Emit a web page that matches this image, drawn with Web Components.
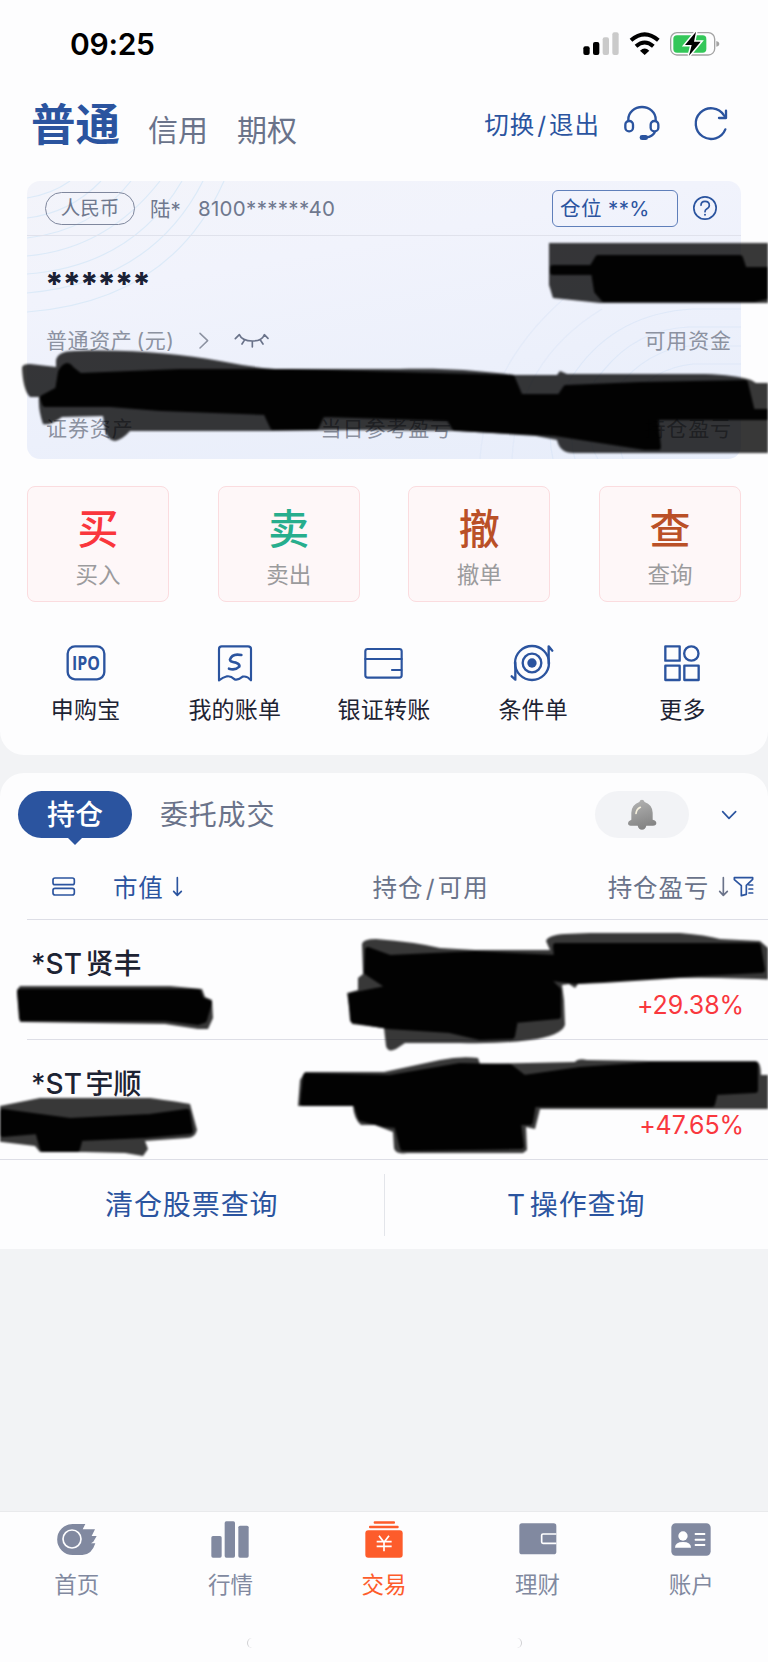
<!DOCTYPE html>
<html lang="zh-CN">
<head>
<meta charset="utf-8">
<title>交易</title>
<style>
html,body{margin:0;padding:0}
body{width:768px;height:1662px;overflow:hidden;background:#f2f3f5;font-family:"Inter","Noto Sans CJK SC",sans-serif}
</style>
</head>
<body>
<trade-app></trade-app>
<script>
const define=(name,html,init)=>{
  const t=document.createElement('template');
  t.innerHTML='<style>*{box-sizing:border-box}'+html;
  customElements.define(name,class extends HTMLElement{
    constructor(){super();this.attachShadow({mode:'open'}).append(t.content.cloneNode(true));}
    connectedCallback(){if(init)init(this,this.shadowRoot);}
  });
};

/* name: [width, height, viewBox, markup] — artwork is drawn on a 3x grid */
const S='fill="none" stroke="currentColor" stroke-linecap="round" stroke-linejoin="round"';
const ICONS={
signal:[36,24,'592 95 108 72','<rect x="593" y="138" width="19" height="26" rx="6"/><rect x="622" y="125" width="19" height="39" rx="6"/><g fill="#cacaca"><rect x="651" y="111" width="19" height="53" rx="6"/><rect x="680" y="96" width="19" height="68" rx="6"/></g>'],
wifi:[31,24,'731 95 93 72','<g fill="none" stroke="currentColor" stroke-width="12"><path d="M737 120Q778 84 819 120"/><path d="M752 138Q778 115 804 138"/></g><path d="M764 151Q778 138 792 151L778 164Z"/>'],
battery:[50,26,'857 92 150 78','<rect x="859" y="97" width="132" height="67" rx="19" fill="none" stroke="#a3a3a3" stroke-width="4"/><path d="M996 122Q1005 124 1005 130Q1005 137 996 139Z" fill="#a3a3a3"/><rect x="867" y="105" width="99" height="52" rx="11" fill="#34c759"/><path d="M935 94L902 134H922L914 166L949 124H929Z" stroke="#fff" stroke-width="9" paint-order="stroke"/>'],
headset:[36,36,'720 315 108 108','<g '+S+' stroke-width="7"><path d="M733 362V358A41 37 0 0 1 815 358V362M812 397Q805 410 787 412"/><rect x="724" y="363" width="23" height="31" rx="11"/><rect x="800" y="363" width="23" height="31" rx="11"/></g><rect x="767" y="405" width="25" height="15" rx="7"/>'],
refresh:[34,34,'929 318 102 102','<g '+S+' stroke-width="7"><path d="M1023 388A46 46 0 1 1 1019 346L1024 353"/><path d="M1025 332V354H1004"/></g>'],
help:[24,24,'927 589 72 72','<circle cx="963" cy="625" r="33.500" fill="none" stroke="currentColor" stroke-width="5"/><g '+S+' stroke-width="5"><path d="M951 617Q951 605 963 605Q976 605 976 617Q976 624 968 628Q963 631 963 636"/></g><circle cx="963" cy="645" r="3"/>'],
chev:[10,18,'597 304 30 54','<path '+S+' stroke-width="4.500" d="M600 308L623 330L600 352"/>'],
eye:[36,16,'700 309 108 48','<g '+S+' stroke-width="5"><path d="M704 326L716 314Q724 333 755 333Q784 333 791 314L802 325M731 331L724 342M755 334V351M779 330L787 342"/></g>'],
ipo:[40,36,'197 526 120 108','<rect x="202" y="530" width="110" height="99" rx="22" fill="none" stroke="currentColor" stroke-width="7"/><text x="257" y="600" text-anchor="middle" font-family="Open Sans" font-weight="700" font-size="57" textLength="84" lengthAdjust="spacingAndGlyphs">IPO</text>'],
bill:[36,37,'651 524 108 111','<g '+S+' stroke-width="6.500"><path d="M657 630V536Q657 528 665 528H744Q753 528 753 536V630Q741 616 728 619Q715 630 704 627Q692 616 681 618Q668 622 657 630Z"/></g><path '+S+' stroke-width="8" d="M724 554Q696 548 690 568Q690 574 708 577Q720 581 718 589Q706 601 687 595"/>'],
card:[40,32,'324 532 120 96','<g '+S+' stroke-width="6.500"><rect x="328" y="538" width="109" height="86" rx="7"/><path d="M328 568H437M408 601H436"/></g>'],
target:[46,40,'382 522 138 120','<g '+S+' stroke-width="7"><circle cx="448" cy="582" r="51"/><circle cx="448" cy="582" r="28"/><path d="M498 583V532L509 545M398 581V632L387 622"/></g><circle cx="448" cy="582" r="14"/>'],
more:[36,36,'838 525 108 108','<g '+S+' stroke-width="7"><rect x="842" y="529" width="43" height="43"/><circle cx="920" cy="550.500" r="21.500"/><rect x="842" y="587" width="43" height="43"/><rect x="899" y="587" width="43" height="43"/></g>'],
bell:[30,32,'727 87 90 96','<defs><linearGradient id="g" x1="0" y1="0" x2="0.300" y2="1"><stop offset="0" stop-color="#b5b5b5"/><stop offset="1" stop-color="#858585"/></linearGradient></defs><path fill="url(#g)" d="M764 96Q766 89 772 89Q777 89 780 96Q803 104 804 128V149Q815 152 815 159Q815 167 805 167H785Q782 179 772 179Q762 179 759 167H738Q730 167 730 159Q730 153 740 149V128Q741 104 764 96Z"/><path d="M754 130Q756 117 767 112" fill="none" stroke="#f5f0dd" stroke-width="5" stroke-linecap="round"/>'],
down:[16,12,'1009 116 48 36','<path '+S+' stroke-width="5" d="M1014 124L1033 144L1053 124"/>'],
list:[24,19,'156 325 72 57','<g fill="none" stroke="currentColor" stroke-width="5"><rect x="159" y="328" width="64" height="20" rx="6"/><rect x="159" y="359" width="64" height="20" rx="6"/></g>'],
arrow:[11,21,'516 321 33 63','<path '+S+' stroke-width="5" d="M532 326V378M521 367L532 379L544 367"/>'],
filter:[22,21,'1045 320 66 63','<g '+S+' stroke-width="5"><path d="M1049 325H1104V330L1085 348V375L1070 379V349L1049 331ZM1093 347H1104M1093 359H1104M1093 371H1104"/></g>'],
home:[40,32,'172 102 120 96','<path d="M219 105H257L249 121H286L276 141H291L281 158L274 163H287Q276 198 248 198H219A46 46 0 0 1 219 105Z"/><circle cx="217" cy="150" r="27" fill="none" stroke="#fdfdfe" stroke-width="5"/>'],
bars:[38,37,'636 93 114 111','<rect x="637" y="138" width="31" height="65" rx="5"/><rect x="677" y="94" width="31" height="109" rx="5"/><rect x="718" y="107" width="31" height="96" rx="5"/>'],
trade:[38,37,'1095 93 114 111','<rect x="1121" y="94" width="64" height="7" rx="3"/><rect x="1107" y="107" width="89" height="8" rx="3"/><rect x="1096" y="121" width="112" height="82" rx="9"/><g fill="none" stroke="#fff" stroke-width="5"><path d="M1137 137L1152 157L1167 137M1152 157V184M1130 155H1175M1130 169H1175"/></g>'],
wallet:[38,32,'401 101 114 96','<rect x="402" y="102" width="111" height="93" rx="8"/><path d="M513 134H473Q469 134 469 138V158Q469 162 473 162H513" fill="none" stroke="#fff" stroke-width="5"/>'],
account:[40,33,'860 99 120 99','<rect x="861" y="100" width="118" height="97" rx="13"/><g fill="#fff"><circle cx="896" cy="138" r="14"/><path d="M872 173Q872 156 896 156Q920 156 920 173Z"/><rect x="931" y="129" width="32" height="6" rx="2"/><rect x="931" y="146" width="32" height="6" rx="2"/><rect x="931" y="162" width="32" height="6" rx="2"/></g>']
};
define('app-icon',':host{display:block;flex:none}svg{display:block;overflow:visible}</style>',(el,r)=>{
  const [w,h,vb,m]=ICONS[el.getAttribute('name')];
  const d=document.createElement('div');
  d.innerHTML=`<svg width="${w}" height="${h}" viewBox="${vb}" fill="currentColor">${m}</svg>`;
  r.append(d);
});

define('status-bar',`:host{display:flex;height:88px;align-items:center;padding:0 48px 0 70px;color:#000}
b{font-weight:600;font-size:30px;line-height:40px;letter-spacing:-.3px;flex:1}
app-icon+app-icon{margin-left:10px}</style>
<b>09:25</b><app-icon name="signal"></app-icon><app-icon name="wifi"></app-icon><app-icon name="battery"></app-icon>`);

define('page-header',`:host{display:flex;height:93px;align-items:flex-start;padding-left:31px;padding-right:40px;color:#6a738a;white-space:nowrap}
b{font-weight:600;font-size:44.500px;line-height:50px;margin-top:12px;color:#2b549f}
.t{font-size:30px;line-height:40px;margin-top:22px}
.a{margin-left:28px}.b{margin-left:29px;flex:1}
.s{font-size:24.500px;line-height:36px;letter-spacing:1px;margin-top:19px;color:#2b549f}
.s i{font-style:normal;margin:0 2px}
app-icon{color:#2b549f}.h{margin:17px 0 0 24px}.r{margin:18px 0 0 34px}</style>
<b>普通</b><span class="t a">信用</span><span class="t b">期权</span><span class="s">切换<i>/</i>退出</span><app-icon class="h" name="headset"></app-icon><app-icon class="r" name="refresh"></app-icon>`);

define('asset-card',`:host{display:block;position:relative;margin:0 27px;height:278px;border-radius:13px;overflow:hidden;background:linear-gradient(170deg,#f3f4fa 0%,#f1f3fc 30%,#ecf0fb 65%,#e7edfa 100%);color:#6f788e;white-space:nowrap}
.art{position:absolute;inset:0}
.row{position:relative;display:flex;align-items:center}
.top{height:55px;border-bottom:1px solid #e0e2ec;padding:0 24px 0 18px}
.cur{width:90px;height:33px;border:1px solid #7f879d;border-radius:17px;font-size:19.500px;line-height:31px;text-align:center}
.nm{font-size:20.500px;margin-left:15px;width:48px}
.no{font-size:20.500px;letter-spacing:.3px;flex:1}
.pos{width:126px;height:37px;border:1.500px solid #5f7fba;border-radius:6px;padding-left:7px;font-size:20.500px;line-height:35px;color:#2b549f;letter-spacing:.4px}
.h{color:#2b549f;margin-left:15px}
.amt{height:88px;padding:9px 0 0 18px;font-size:32px;font-weight:800;color:#1a2135;letter-spacing:-1.200px}
.lab{font-size:21px;line-height:30px;letter-spacing:.9px;color:#8c92a1;padding:0 9px 0 19px}
.l1{height:34px}.l1 .n{width:130px;word-spacing:-2.500px;letter-spacing:.6px}.l2{height:32px;margin-top:55px}
.g{flex:1}.c{margin-left:23px}.e{margin-left:25px;color:#6a738a}.m{margin-left:187px;flex:1}</style>
<svg class="art" width="714" height="278" fill="none"><g stroke="#dceaf8" stroke-width="1.200"><path d="M0 17Q25 13 43 0M0 37Q43 32 74 0M0 57Q65 50 104 0M0 75Q80 68 133 0M0 93Q105 85 155 0M0 112Q125 101 176 0M0 131Q144 120 197 0"/></g><g stroke="#dbe6f8" stroke-width="1.200"><path d="M714 128H666Q590 132 549 190Q515 235 526 278M714 146H662Q610 148 576 190Q535 235 548 278M714 165H662Q620 169 590 207Q550 245 571 278M714 183H666Q625 187 604 220Q585 245 596 278" opacity=".8"/><path d="M546 110Q460 180 453 278M575 128Q490 180 485 278" opacity=".5"/></g></svg>
<div class="row top"><span class="cur">人民币</span><span class="nm">陆*</span><span class="no">8100******40</span><span class="pos">仓位 **%</span><app-icon class="h" name="help"></app-icon></div>
<div class="row amt">******</div>
<div class="row lab l1"><span class="n">普通资产 (元)</span><app-icon class="c" name="chev"></app-icon><app-icon class="e" name="eye"></app-icon><span class="g"></span><span>可用资金</span></div>
<div class="row lab l2"><span>证券资产</span><span class="m">当日参考盈亏</span><span>持仓盈亏</span></div>`);

define('action-tile',`:host{display:flex;flex-direction:column;align-items:center;width:142px;height:116px;border:1.500px solid #fbdcdf;border-radius:8px;background:#fef7f8}
b{font-weight:500;font-size:41px;line-height:46px;margin-top:19px}
span{font-size:22.500px;line-height:30px;margin-top:8px;color:#9b9b9d}</style>
<b><slot name="mark"></slot></b><span><slot></slot></span>`);

define('quick-entry',`:host{display:flex;flex-direction:column;align-items:center;color:#1d2333;white-space:nowrap}
div{height:46px;display:flex;align-items:center;color:#2b549f}
span{font-size:23px;letter-spacing:.2px;line-height:32px;margin-top:8px}</style>
<div><slot name="icon"></slot></div><span><slot></slot></span>`);

define('sort-head',`:host{display:flex;height:73px;align-items:center;color:#6a738a;font-size:24.500px;letter-spacing:.8px;border-bottom:1px solid #dddee6;margin-left:27px;padding:7px 13px 0 25px;white-space:nowrap}
.bl{color:#2b549f}.v{margin:0 8px 0 37px}.mid{margin-left:190px;flex:1}.mid i{font-style:normal;margin:0 2.500px}.ar{margin-left:9px}.f{margin-left:4px}</style>
<app-icon class="bl" name="list"></app-icon><span class="bl v">市值</span><app-icon class="bl" name="arrow"></app-icon><span class="mid">持仓<i>/</i>可用</span><span>持仓盈亏</span><app-icon class="ar" name="arrow"></app-icon><app-icon class="f bl" name="filter"></app-icon>`);

define('holding-row',`:host{display:flex;justify-content:space-between;height:120px;margin-left:27px;padding:24px 24px 0 4px;border-bottom:1px solid #dddee6;white-space:nowrap}
:host([last]){margin-left:0;padding-left:31px}
b{font-weight:500;font-size:28px;line-height:40px;color:#1d2333;word-spacing:-4px}
span{color:#f9383e;font-size:25px;line-height:34px;margin-top:44px;letter-spacing:-.1px}</style>
<b><slot></slot></b><span><slot name="rate"></slot></span>`);

define('holdings-panel',`:host{display:block;background:#fdfdfe;border-radius:24px 24px 0 0;margin-top:18px;height:476px}
.tabs{display:flex;height:74px;padding:18px 31px 0 18px;align-items:flex-start;white-space:nowrap}
.on{position:relative;width:114px;height:47px;border-radius:24px;background:#2b549f;color:#fff;font-weight:500;font-size:28px;line-height:48px;text-align:center}
.on:after{content:"";position:absolute;left:49px;top:46px;border:8px solid transparent;border-top:8px solid #2b549f;border-bottom:0}
.off{margin-left:28px;font-size:28px;line-height:48px;letter-spacing:.8px;color:#6a738a;flex:1}
.bell{width:94px;height:47px;border-radius:24px;background:#f2f3f6;display:flex;align-items:center;justify-content:center}
.d{color:#2b549f;margin:18px 0 0 32px}
.foot{display:flex;height:89px;align-items:center;color:#2b549f;font-size:28px;letter-spacing:.9px;line-height:40px}
.foot span{flex:1;text-align:center}.foot i{width:1px;height:62px;background:#e3e5ea}
.foot .w{word-spacing:-5px}</style>
<div class="tabs"><span class="on">持仓</span><span class="off">委托成交</span><span class="bell"><app-icon name="bell"></app-icon></span><app-icon class="d" name="down"></app-icon></div>
<slot></slot>
<div class="foot"><span>清仓股票查询</span><i></i><span class="w">T 操作查询</span></div>`);

define('tab-item',`:host{display:flex;flex-direction:column;align-items:center;color:#8189a0}
:host([active]){color:#fd5c2b}
div{height:42px;display:flex;align-items:center}
span{font-size:22.500px;line-height:32px;margin-top:9px}</style>
<div><slot name="icon"></slot></div><span><slot></slot></span>`);

/* marker strokes lying over the page */
define('ink-layer',`:host{position:absolute;left:0;top:0;width:768px;height:1662px;pointer-events:none}
svg{display:block;filter:blur(1.300px)}.k{stroke:#000;stroke-width:6;stroke-linejoin:round}</style>
<svg width="768" height="1662" viewBox="0 0 768 1662">
<g opacity=".78">
<path d="M549 243H780V300L768 303H600L553 298L549 285Z"/>
<path d="M22 368Q22 364 30 364L56 367V360Q58 351 75 351C130 349 180 354 220 361Q250 367 275 369H400C450 368 480 371 515 375H557L560 371L567 374L705 374Q735 375 751 380L756 383H780V453H575Q560 454 557 440L536 436L460 431L350 430L270 431H130Q123 439 115 441Q108 441 105 430L103 416L62 417Q50 426 43 424Q38 410 39 397H30Q23 390 22 368Z"/>
<path d="M17 990L20 986L170 986L202 989L205 997L212 1000L213 1018L208 1029L198 1029L165 1024L20 1022Z"/>
<path d="M362 944Q363 939 376 939Q415 942 440 948L475 950H550L546 941Q548 935 565 934L590 933H680Q706 935 720 939L760 941L768 948H780V980Q710 977 680 978L604 983L578 984L575 988L569 984L562 985L564 1000L565 1025Q561 1036 530 1040Q500 1044 460 1043H405L396 1049Q388 1053 386 1046L384 1028L352 1024L347 993L358 990V978L363 974Z"/>
<path d="M300 1080L305 1072H384L440 1060Q460 1056 478 1058L480 1064L575 1062Q578 1058 587 1060L650 1061H756Q761 1062 761 1075H780V1109H540L535 1129L526 1127L527 1150L523 1153H408Q395 1155 394 1148L393 1132L375 1125H361Q354 1119 353 1106H298Z"/>
<path d="M-5 1107L40 1098H150Q180 1102 190 1104L197 1130Q195 1138 187 1138L145 1141L148 1149L143 1156L125 1153L85 1152H40L35 1146L-5 1141Z"/>
</g>
<g opacity=".97" class="k">
<path d="M553 268H592L598 258H740L744 270H768V296L754 299H604L597 291L594 272H553Z"/>
<path d="M61 372Q66 362 71 369L80 376L180 372L290 372L512 378L520 397H560L566 388L640 385L745 383L752 412H780V417L655 417L658 447L645 447L555 433L455 428L449 418L322 414L316 427H273L266 412L160 408L110 404H45L43 398L58 390Z"/>
<path d="M20 992L198 992L201 1000L209 1003L204 1020L198 1022L165 1018L22 1018Z"/>
<path d="M390 958L475 954L557 958L556 946L758 946L762 970L700 973L604 979L575 981L545 977L558 990V1016L515 1020L512 1036L480 1037L450 1030L388 1026L353 1020L351 996L391 988L367 972L368 950Z"/>
<path d="M306 1076L390 1078L460 1066L510 1067L524 1078L580 1070L650 1065L755 1065L755 1090L715 1092L712 1104H533L530 1122L518 1122L521 1146L415 1148L403 1148L397 1125L384 1124L361 1118L356 1103H303Z"/>
<path d="M3 1112L70 1121L150 1117L187 1112L190 1131L145 1135L80 1138L77 1149H43L38 1131L3 1134Z"/>
</g></svg>`);

define('trade-app',`:host{display:flex;flex-direction:column;position:relative;width:768px;height:1662px;background:#f2f3f5;overflow:hidden}
.first{background:#fdfdfe;border-radius:0 0 24px 24px;height:755px;flex:none}
.acts{display:flex;justify-content:space-between;margin:27px 27px 0}
.quick{display:grid;grid-template-columns:repeat(5,1fr);margin:38px 11px 0}
nav{flex:none;height:151px;margin-top:auto;background:#fdfdfe;border-top:1px solid #e9eaec;display:grid;grid-template-columns:repeat(5,1fr);grid-template-rows:100px 1fr;padding-top:6px}
.pill{grid-column:1/6;justify-self:center;width:275px;height:10px;margin-top:20px;border-radius:5px;border:solid #cfcfd2;border-width:0 1.500px;background:#fdfdfe}
holdings-panel{flex:none}</style>
<div class="first"><status-bar></status-bar><page-header></page-header><asset-card></asset-card>
<div class="acts">
<action-tile><span slot="mark" style="color:#fa363c">买</span>买入</action-tile>
<action-tile><span slot="mark" style="color:#27ae8d">卖</span>卖出</action-tile>
<action-tile><span slot="mark" style="color:#ba5027">撤</span>撤单</action-tile>
<action-tile><span slot="mark" style="color:#ba5027">查</span>查询</action-tile></div>
<div class="quick">
<quick-entry><app-icon slot="icon" name="ipo"></app-icon>申购宝</quick-entry>
<quick-entry><app-icon slot="icon" name="bill"></app-icon>我的账单</quick-entry>
<quick-entry><app-icon slot="icon" name="card"></app-icon>银证转账</quick-entry>
<quick-entry><app-icon slot="icon" name="target"></app-icon>条件单</quick-entry>
<quick-entry><app-icon slot="icon" name="more"></app-icon>更多</quick-entry></div></div>
<holdings-panel><sort-head></sort-head>
<holding-row>*ST 贤丰<span slot="rate">+29.38%</span></holding-row>
<holding-row last>*ST 宇顺<span slot="rate">+47.65%</span></holding-row></holdings-panel>
<nav>
<tab-item><app-icon slot="icon" name="home"></app-icon>首页</tab-item>
<tab-item><app-icon slot="icon" name="bars"></app-icon>行情</tab-item>
<tab-item active><app-icon slot="icon" name="trade"></app-icon>交易</tab-item>
<tab-item><app-icon slot="icon" name="wallet"></app-icon>理财</tab-item>
<tab-item><app-icon slot="icon" name="account"></app-icon>账户</tab-item>
<div class="pill"></div></nav>
<ink-layer></ink-layer>`);
</script>
</body>
</html>
